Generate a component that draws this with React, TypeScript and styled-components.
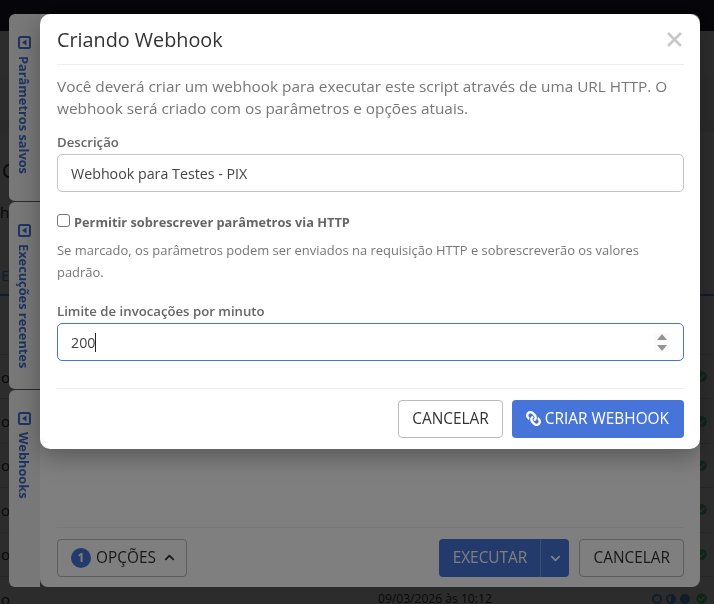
import React from 'react';
import styled, { createGlobalStyle } from 'styled-components';
import { FaLink, FaCheckCircle, FaChevronUp, FaChevronDown } from 'react-icons/fa';

const GlobalStyle = createGlobalStyle`
  html, body {
    margin: 0;
    height: 100%;
    overflow: hidden;
    background: #fff;
    font-family: "Open Sans", "Noto Sans", sans-serif;
    color: #333;
  }
`;

const CollapseIcon: React.FC = () => (
  <svg width="13" height="13" viewBox="0 0 13 13">
    <rect x="1" y="1" width="11" height="11" rx="1.5" fill="none" stroke="currentColor" strokeWidth="2" />
    <path d="M8.5 3.5 V9.5 L4 6.5 Z" fill="currentColor" />
  </svg>
);

const App: React.FC = () => {
  const dates = ['', '', '', '', '', '09/03/2026 às 10:12'];

  return (
    <>
      <GlobalStyle />
      <Page>
        <TopBar />
        <SubBar />
        <Strip />
        <ThinStrip />
        <Heading>C</Heading>
        <SearchRow>h</SearchRow>
        <TabRow>E</TabRow>
        <HeaderRow />
        {dates.map((date, i) => (
          <TableRow key={i}>
            <RowName>o</RowName>
            <RowDate>{date}</RowDate>
            <Dots>
              <Dot />
              <HalfDot />
              <FullDot />
              <FaCheckCircle size={11} color="#4fd888" />
            </Dots>
          </TableRow>
        ))}
      </Page>
      <PageBackdrop />
      <BackDialog>
        <SideTabs>
          <SideTab $height={188}>
            <CollapseIcon />
            <SideLabel>Parâmetros salvos</SideLabel>
          </SideTab>
          <SideTab $height={188}>
            <CollapseIcon />
            <SideLabel>Execuções recentes</SideLabel>
          </SideTab>
          <SideTab $height={197} $last>
            <CollapseIcon />
            <SideLabel>Webhooks</SideLabel>
          </SideTab>
        </SideTabs>
        <BackBody>
          <BackFooter>
            <OptionsButton>
              <Badge>1</Badge>
              OPÇÕES
              <OptionsChevron size={11} />
            </OptionsButton>
            <FooterSpacer />
            <SplitButton>
              <SplitMain>EXECUTAR</SplitMain>
              <SplitCaret><FaChevronDown size={11} /></SplitCaret>
            </SplitButton>
            <OutlineButton>CANCELAR</OutlineButton>
          </BackFooter>
        </BackBody>
      </BackDialog>
      <DialogBackdrop />
      <Dialog>
        <DialogHeader>
          <Title>Criando Webhook</Title>
          <CloseButton>
            <svg width="15" height="15" viewBox="0 0 15 15">
              <path d="M1 1 L14 14 M14 1 L1 14" stroke="#c8c8c8" strokeWidth="2.6" fill="none" />
            </svg>
          </CloseButton>
        </DialogHeader>
        <DialogBody>
          <Intro>
            Você deverá criar um webhook para executar este script através de uma URL HTTP. O webhook será criado com os parâmetros e opções atuais.
          </Intro>
          <Label>Descrição</Label>
          <Input>Webhook para Testes - PIX</Input>
          <CheckRow>
            <Checkbox />
            <CheckLabel>Permitir sobrescrever parâmetros via HTTP</CheckLabel>
          </CheckRow>
          <Help>
            Se marcado, os parâmetros podem ser enviados na requisição HTTP e sobrescreverão os valores padrão.
          </Help>
          <LimitLabel>Limite de invocações por minuto</LimitLabel>
          <NumberInput>
            <span>200</span>
            <Caret />
            <Spinner>
              <SpinUp />
              <SpinDown />
            </Spinner>
          </NumberInput>
        </DialogBody>
        <DialogFooter>
          <WhiteButton>CANCELAR</WhiteButton>
          <PrimaryButton><LinkIcon size={15} /> CRIAR WEBHOOK</PrimaryButton>
        </DialogFooter>
      </Dialog>
    </>
  );
};

export default App;

const Page = styled.div`
  display: flex;
  flex-direction: column;
  height: 604px;
  overflow: hidden;
  background: #fff;
`;

const TopBar = styled.div`
  flex: none;
  height: 31px;
  background: #1e2139;
`;

const SubBar = styled.div`
  flex: none;
  height: 44px;
  background: #fff;
`;

const Strip = styled.div`
  flex: none;
  height: 45px;
  background: #f8f8f8;
`;

const ThinStrip = styled.div`
  flex: none;
  height: 12px;
  background: #eee;
`;

const Heading = styled.div`
  flex: none;
  height: 60px;
  box-sizing: border-box;
  padding: 26px 0 0 2px;
  font-size: 20px;
  line-height: 26px;
  color: #333;
`;

const SearchRow = styled.div`
  flex: none;
  height: 40px;
  line-height: 40px;
  font-size: 15px;
`;

const TabRow = styled.div`
  flex: none;
  height: 64px;
  box-sizing: border-box;
  padding: 33px 0 0 1px;
  font-size: 15px;
  line-height: 20px;
  color: #6a9cff;
  border-bottom: 2px solid #6a9cff;
`;

const HeaderRow = styled.div`
  flex: none;
  height: 58px;
`;

const TableRow = styled.div`
  flex: none;
  display: grid;
  grid-template-columns: 378px 1fr auto;
  align-items: center;
  height: 44.4px;
  box-sizing: border-box;
  border-top: 1px solid #ddd;
  font-size: 15px;
  line-height: 16px;
`;

const RowName = styled.span`
  padding-left: 1px;
`;

const RowDate = styled.span`
  font-size: 12.1px;
`;

const Dots = styled.div`
  display: flex;
  align-items: center;
  gap: 4px;
  margin-right: 7px;
`;

const Dot = styled.span`
  width: 10px;
  height: 10px;
  box-sizing: border-box;
  border: 2px solid #6a9cff;
  border-radius: 50%;
`;

const HalfDot = styled(Dot)`
  background: linear-gradient(90deg, #fff 50%, #6a9cff 50%);
`;

const FullDot = styled(Dot)`
  background: #6a9cff;
  margin-right: 2px;
`;

const PageBackdrop = styled.div`
  position: fixed;
  inset: 0;
  background: rgba(0, 0, 0, 0.65);
`;

const DialogBackdrop = styled.div`
  position: fixed;
  inset: 0;
  background: rgba(0, 0, 0, 0.5);
`;

const BackDialog = styled.div`
  position: fixed;
  left: 9px;
  top: 14px;
  width: 691px;
  height: 573px;
  display: flex;
`;

const SideTabs = styled.div`
  flex: none;
  width: 31px;
  display: flex;
  flex-direction: column;
`;

const SideTab = styled.div<{ $height: number; $last?: boolean }>`
  flex: none;
  height: ${p => p.$height}px;
  box-sizing: border-box;
  display: flex;
  flex-direction: column;
  align-items: center;
  gap: 7px;
  padding-top: 22px;
  background: #f0f0f0;
  color: #3f68c8;
  border-radius: 6px 0 0 6px;
  border-bottom: ${p => (p.$last ? 'none' : '1px solid #555')};
`;

const SideLabel = styled.span`
  writing-mode: vertical-rl;
  font-size: 12.8px;
  font-weight: 700;
  white-space: nowrap;
  margin-left: -1px;
`;

const BackBody = styled.div`
  flex: 1;
  display: flex;
  flex-direction: column;
  justify-content: flex-end;
  background: #fff;
  border-radius: 0 8px 8px 8px;
  padding: 0 16px 10px 17px;
`;

const BackFooter = styled.div`
  display: flex;
  align-items: center;
  gap: 10px;
  padding-top: 11px;
  border-top: 1px solid #eee;
`;

const FooterSpacer = styled.div`
  flex: 1;
`;

const OutlineButton = styled.div`
  display: flex;
  align-items: center;
  height: 38px;
  box-sizing: border-box;
  padding: 0 13px 1px;
  border: 1px solid #bbb;
  border-radius: 4px;
  font-size: 15.4px;
  color: #333;
`;

const OptionsButton = styled(OutlineButton)`
  gap: 5px;
  padding-right: 11px;
`;

const OptionsChevron = styled(FaChevronUp)`
  margin-left: 3px;
`;

const Badge = styled.span`
  display: flex;
  align-items: center;
  justify-content: center;
  width: 20px;
  height: 20px;
  border-radius: 50%;
  background: #4674d8;
  color: #fff;
  font-size: 12px;
  font-weight: 700;
`;

const SplitButton = styled.div`
  display: flex;
  height: 38px;
  border-radius: 4px;
  overflow: hidden;
  background: #4674d8;
  color: #fff;
  font-size: 15.4px;
`;

const SplitMain = styled.div`
  display: flex;
  align-items: center;
  width: 102px;
  box-sizing: border-box;
  justify-content: center;
  padding-bottom: 1px;
  border-right: 1px solid #7f9de3;
`;

const SplitCaret = styled.div`
  display: flex;
  align-items: center;
  justify-content: center;
  width: 28px;
`;

const Dialog = styled.div`
  position: fixed;
  left: 40px;
  top: 14px;
  width: 660px;
  height: 435px;
  box-sizing: border-box;
  display: flex;
  flex-direction: column;
  background: #fff;
  border-radius: 10px;
  padding: 0 16px 0 17px;
  box-shadow: 0 8px 24px rgba(0, 0, 0, 0.3);
`;

const DialogHeader = styled.div`
  flex: none;
  display: flex;
  align-items: center;
  justify-content: space-between;
  height: 50px;
  border-bottom: 1px solid #eee;
`;

const Title = styled.h2`
  margin: 0;
  font-size: 19.8px;
  font-weight: 400;
  color: #333;
`;

const CloseButton = styled.div`
  display: flex;
  margin-right: 2px;
`;

const DialogBody = styled.div`
  flex: 1;
  display: flex;
  flex-direction: column;
`;

const Intro = styled.p`
  margin: 10px 0 0;
  font-size: 15.35px;
  line-height: 22px;
  color: #777;
`;

const Label = styled.div`
  margin-top: 14px;
  font-size: 13.2px;
  line-height: 18px;
  font-weight: 600;
  color: #666;
`;

const LimitLabel = styled(Label)`
  margin-top: 19px;
`;

const Input = styled.div`
  margin-top: 3px;
  display: flex;
  align-items: center;
  height: 38px;
  box-sizing: border-box;
  padding: 0 13px;
  border: 1px solid #c4c4c4;
  border-radius: 5px;
  font-size: 14.25px;
  color: #444;
`;

const CheckRow = styled.div`
  margin-top: 21px;
  display: flex;
  align-items: center;
  gap: 4px;
`;

const Checkbox = styled.span`
  width: 13px;
  height: 13px;
  box-sizing: border-box;
  border: 1px solid #767676;
  border-radius: 3px;
  margin-top: -3px;
`;

const CheckLabel = styled.span`
  font-size: 12.8px;
  font-weight: 700;
  color: #666;
`;

const Help = styled.div`
  margin-top: 8px;
  font-size: 12.95px;
  line-height: 22px;
  color: #777;
`;

const NumberInput = styled(Input)`
  border-color: #4674d8;
`;

const Caret = styled.span`
  width: 1px;
  height: 19px;
  background: #222;
`;

const Spinner = styled.span`
  margin-left: auto;
  display: flex;
  flex-direction: column;
  align-items: center;
  gap: 5px;
  padding: 1px 3px;
  background: #fafafa;
`;

const SpinUp = styled.span`
  width: 0;
  height: 0;
  border-left: 5px solid transparent;
  border-right: 5px solid transparent;
  border-bottom: 6.5px solid #939393;
`;

const SpinDown = styled.span`
  width: 0;
  height: 0;
  border-left: 5px solid transparent;
  border-right: 5px solid transparent;
  border-top: 6.5px solid #939393;
`;

const DialogFooter = styled.div`
  flex: none;
  display: flex;
  justify-content: flex-end;
  gap: 9px;
  height: 49px;
  padding-top: 11px;
  border-top: 1px solid #eee;
`;

const WhiteButton = styled(OutlineButton)`
  background: #fff;
`;

const PrimaryButton = styled.div`
  display: flex;
  align-items: center;
  gap: 4px;
  height: 38px;
  box-sizing: border-box;
  padding: 0 15px 1px 14px;
  background: #4674d8;
  border-radius: 4px;
  font-size: 15.4px;
  font-weight: 500;
  color: #fff;
`;

const LinkIcon = styled(FaLink)`
  transform: scaleX(-1);
`;
